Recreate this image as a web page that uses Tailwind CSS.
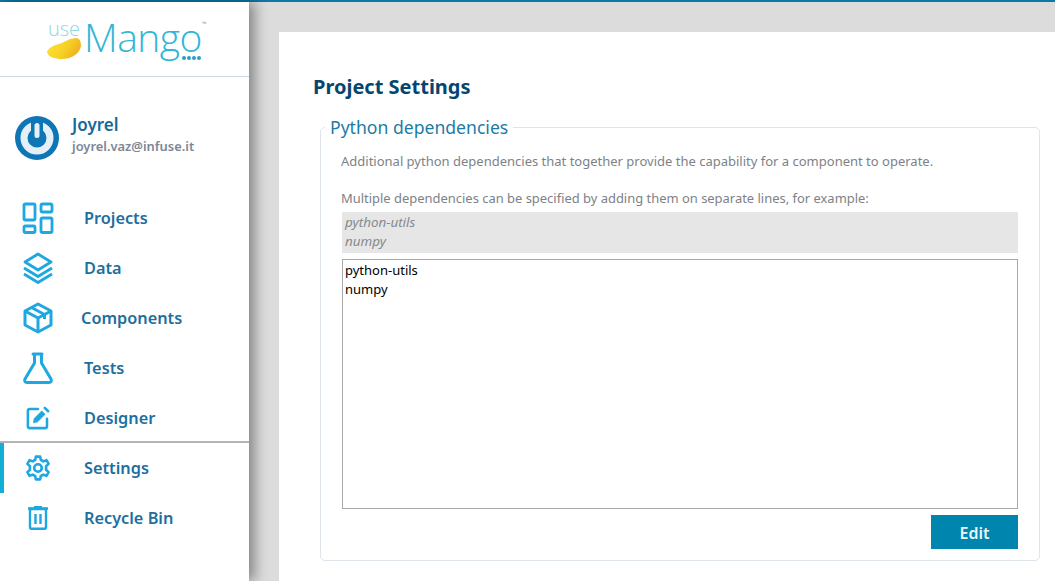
<!DOCTYPE html>
<html lang="en">
<head>
    <meta charset="UTF-8">
    <title>Project Settings</title>
    <script src="https://cdn.jsdelivr.net/npm/@tailwindcss/browser@4"></script>
</head>
<body class="h-[581px] w-[1055px] overflow-hidden bg-[#dcdcdc] font-['Noto_Sans','Open_Sans',sans-serif]">
    <div class="flex h-full border-t-2 border-[#0f76a5]">
        <!-- sidebar -->
        <aside class="z-10 flex w-[249px] shrink-0 flex-col bg-white shadow-[6px_0_12px_rgba(0,0,0,0.38)]">
            <div class="flex h-[75px] shrink-0 items-start border-b border-[#c9d9e8] pl-[47px] pt-[13px]">
                <div class="relative h-[50px] w-[160px]">
                    <span class="absolute left-[1px] top-[2px] font-['Open_Sans'] text-[20px] leading-[24px] font-light text-[#8fd8dc]">use</span>
                    <span class="absolute left-[37px] top-[7px] font-['Open_Sans'] text-[39px] leading-[30px] font-light tracking-[-0.5px] text-[#33b5d8]">Mango</span>
                    <span class="absolute left-[155px] top-[6px] text-[6px] leading-[6px] text-[#9aa5aa]">™</span>
                    <svg class="absolute left-0 top-[23px]" width="35" height="22" viewBox="0 0 35 22">
                        <defs>
                            <linearGradient id="mango" x1="0" y1="0" x2="1" y2="0.4">
                                <stop offset="0" stop-color="#fbe53a"/>
                                <stop offset="0.6" stop-color="#f8d226"/>
                                <stop offset="1" stop-color="#efb41f"/>
                            </linearGradient>
                        </defs>
                        <path d="M0 14C1 10 7 7 12 6C18 4 23 0 29 0C33 0 34 4 34 8C33 15 25 21 15 21C8 21 1 19 0 14Z" fill="url(#mango)"/>
                    </svg>
                    <span class="absolute left-[135px] top-[41px] flex gap-[1px]">
                        <i class="size-[4px] rounded-full bg-[#2a9fc4]"></i><i class="size-[4px] rounded-full bg-[#2a9fc4]"></i><i class="size-[4px] rounded-full bg-[#2a9fc4]"></i><i class="size-[4px] rounded-full bg-[#2a9fc4]"></i>
                    </span>
                </div>
            </div>
            <div class="flex items-center pl-[15px] pt-[39px]">
                <svg width="44" height="44" viewBox="0 0 44 44" class="shrink-0">
                    <circle cx="22" cy="22" r="22" fill="#0f76b5"/>
                    <circle cx="22" cy="22" r="13" fill="none" stroke="#e4f0f7" stroke-width="7"/>
                    <rect x="16" y="4" width="12" height="12" fill="#0f76b5"/>
                    <rect x="19.500" y="7" width="5" height="15" rx="2.500" fill="#e4f0f7"/>
                </svg>
                <div class="ml-[13px] mt-[-7px]">
                    <div class="text-[17px] leading-[22px] font-semibold text-[#17699a]">Joyrel</div>
                    <div class="mt-[1px] text-[12.9px] leading-[18px] font-semibold text-[#7b8794]">joyrel.vaz@infuse.it</div>
                </div>
            </div>
            <nav class="mt-[33px] flex flex-col text-[16.3px] font-semibold text-[#1c6f9f]">
                <a class="relative flex h-[50px] items-center pl-[84px]">
                    <svg class="absolute left-[22px] top-[9px]" width="32" height="32" viewBox="0 0 32 32" fill="none" stroke="#1ea7e0" stroke-width="2.800" stroke-linejoin="round">
                        <rect x="2" y="2" width="11" height="16" rx="1.500"/><rect x="19" y="2" width="11" height="8" rx="1.500"/><rect x="2" y="24" width="11" height="6.500" rx="1.500"/><rect x="19" y="16" width="11" height="14.500" rx="1.500"/>
                    </svg>
                    Projects
                </a>
                <a class="relative flex h-[50px] items-center pl-[84px]">
                    <svg class="absolute left-[22px] top-[9px]" width="32" height="32" viewBox="0 0 32 32" fill="none" stroke="#1ea7e0" stroke-width="2.800" stroke-linejoin="round">
                        <path d="M16 2L29 10L16 18L3 10Z"/><path d="M2 16L16 24.500L30 16"/><path d="M2 22L16 30.500L30 22"/>
                    </svg>
                    Data
                </a>
                <a class="relative flex h-[50px] items-center pl-[81px]">
                    <svg class="absolute left-[22px] top-[9px]" width="32" height="32" viewBox="0 0 32 32" fill="none" stroke="#1ea7e0" stroke-width="3" stroke-linejoin="round">
                        <path d="M16 2L29 9V23L16 30L3 23V9Z"/><path d="M3 9L16 16L29 9"/><path d="M16 16V30"/><path d="M9.500 5.500L22.500 12.500V17"/>
                    </svg>
                    Components
                </a>
                <a class="relative flex h-[50px] items-center pl-[84px]">
                    <svg class="absolute left-[22px] top-[9px]" width="32" height="32" viewBox="0 0 32 32" fill="none" stroke="#1ea7e0" stroke-width="3" stroke-linejoin="round" stroke-linecap="round">
                        <path d="M11 2H20M12.500 2V11L3 27C2 29 3 30.500 5 30.500H27C29 30.500 30 29 29 27L19.500 11V2"/>
                    </svg>
                    Tests
                </a>
                <a class="relative flex h-[50px] items-center pl-[84px]">
                    <svg class="absolute left-[26px] top-[13px]" width="24" height="24" viewBox="0 0 32 32" fill="none" stroke="#1ea7e0" stroke-width="3.400" stroke-linecap="round">
                        <path d="M16 4H5C3.500 4 2.500 5 2.500 6.500V27C2.500 28.500 3.500 29.500 5 29.500H25.500C27 29.500 28 28.500 28 27V17"/>
                        <path d="M10 22L11 16.500L21 6.500L25.500 11L15.500 21Z" fill="#1ea7e0" stroke-width="1"/>
                        <path d="M25 2.500L29.500 7"/>
                    </svg>
                    Designer
                </a>
                <a class="relative flex h-[50px] items-center pl-[84px]">
                    <span class="absolute left-0 top-[-2px] h-[2px] w-full bg-[#b5b5b5]"></span>
                    <span class="absolute left-0 top-0 h-[50px] w-[4px] bg-[#12aed4]"></span>
                    <svg class="absolute left-[25px] top-[12px]" width="26" height="26" viewBox="0 0 24 24" fill="none" stroke="#1ea7e0" stroke-width="2.400" stroke-linejoin="round">
                        <path d="M10 1.500H14L14.600 4.700C15.400 5 16.100 5.400 16.800 5.900L19.800 4.800L21.800 8.200L19.400 10.300C19.500 11.100 19.500 12.900 19.400 13.700L21.800 15.800L19.800 19.200L16.800 18.100C16.100 18.600 15.400 19 14.600 19.300L14 22.500H10L9.400 19.300C8.600 19 7.900 18.600 7.200 18.100L4.200 19.200L2.200 15.800L4.600 13.700C4.500 12.900 4.500 11.100 4.600 10.300L2.200 8.200L4.200 4.800L7.200 5.900C7.900 5.400 8.600 5 9.400 4.700Z"/>
                        <circle cx="12" cy="12" r="3.500"/>
                    </svg>
                    Settings
                </a>
                <a class="relative flex h-[50px] items-center pl-[84px]">
                    <svg class="absolute left-[27px] top-[13px]" width="22" height="24" viewBox="0 0 22 24" fill="none" stroke="#1ea7e0" stroke-width="2.400" stroke-linejoin="round">
                        <path d="M3 3H19V21C19 22 18.500 22.800 17.500 22.800H4.500C3.500 22.800 3 22 3 21Z"/><path d="M1 2.500H21M7 1.200H15"/><path d="M8.500 8V18M13.500 8V18"/>
                    </svg>
                    Recycle Bin
                </a>
            </nav>
        </aside>
        <!-- content -->
        <main class="ml-[30px] mt-[30px] flex-1 bg-white pl-[34px] pr-[15px]">
            <h1 class="mt-[41px] text-[20px] leading-[28px] font-bold text-[#04466f]">Project Settings</h1>
            <fieldset class="mt-[14px] ml-[7px] h-[446px] rounded-[5px] border border-[#dde5ea] pl-[21px] pr-[21px]">
                <legend class="ml-[-17px] px-[5px] text-[17.600px] leading-[25px] text-[#1c7ba6]">Python dependencies</legend>
                <p class="ml-[-1px] mt-[12px] text-[13px] leading-[18px] text-[#7d8287]">Additional python dependencies that together provide the capability for a component to operate.</p>
                <p class="ml-[-1px] mt-[19px] text-[12.950px] leading-[18px] text-[#7d8287]">Multiple dependencies can be specified by adding them on separate lines, for example:</p>
                <div class="mt-[5px] h-[41px] bg-[#e6e6e6] pl-[3px] pt-[1px] text-[13.400px] leading-[19px] text-[#85898d] italic">python-utils<br>numpy</div>
                <div class="mt-[6px] h-[250px] border border-[#a9a9a9] pl-[2px] pt-[1px] text-[13px] leading-[19px] text-black">python-utils<br>numpy</div>
                <div class="mt-[6px] flex justify-end">
                    <button class="h-[34px] w-[87px] bg-[#0086ae] pt-[2px] text-[16px] font-semibold text-[#e8f6fa]">Edit</button>
                </div>
            </fieldset>
        </main>
    </div>
</body>
</html>
